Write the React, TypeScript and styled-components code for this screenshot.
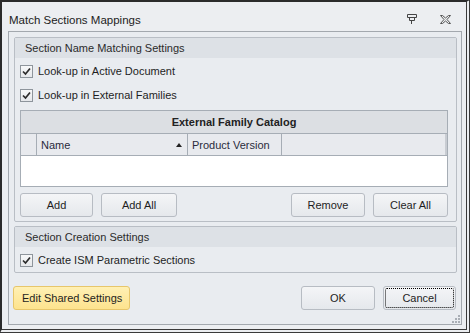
import styled, { createGlobalStyle } from "styled-components";

const GlobalStyle = createGlobalStyle`
  html, body {
    margin: 0;
    padding: 0;
    background: #ffffff;
  }
  body {
    font-family: "Liberation Sans", Arial, sans-serif;
    font-size: 11px;
    color: #1e1e1e;
  }
`;

const Window = styled.div`
  box-sizing: border-box;
  width: 470px;
  height: 333px;
  display: flex;
  flex-direction: column;
  background: #eceef1;
  border-left: 2px solid #2b2b2b;
  border-top: 2px solid #2b2b2b;
  border-right: 4px double #3a3a3a;
  border-bottom: 4px double #3a3a3a;
  padding: 0 4px 4px 6px;
`;

const TitleBar = styled.div`
  height: 29px;
  display: flex;
  align-items: center;
  padding-left: 1px;
  font-size: 11.5px;
  color: #222;
`;

const Title = styled.span`
  flex: 1;
  padding-top: 6px;
`;

const TitleButton = styled.span<{ $gap: number }>`
  width: 14px;
  height: 14px;
  display: flex;
  align-items: center;
  justify-content: center;
  margin-top: 6px;
  margin-right: ${(p) => p.$gap}px;
`;

const Frame = styled.div`
  flex: 1;
  position: relative;
  display: flex;
  flex-direction: column;
  background: #e9ecf0;
  border: 1px solid #a3a8ae;
  padding: 5px 4px 0 5px;
`;

const Group = styled.div`
  border: 1px solid #b9bec5;
  border-radius: 2px;
  display: flex;
  flex-direction: column;
  margin-bottom: 4px;
`;

const GroupHeader = styled.div`
  height: 20px;
  display: flex;
  align-items: center;
  padding-left: 10px;
  background: #dde1e6;
  color: #2b2b2b;
`;

const GroupBody = styled.div<{ $bottom: number }>`
  display: flex;
  flex-direction: column;
  padding: 1px 8px ${(p) => p.$bottom}px 5px;
`;

const CheckRow = styled.label`
  height: 24px;
  display: flex;
  align-items: center;
  gap: 5px;
`;

const Box = styled.span`
  box-sizing: border-box;
  width: 13px;
  height: 13px;
  border: 1px solid #8e959c;
  background: linear-gradient(#f7f8f9, #e6e8eb);
  display: flex;
  align-items: center;
  justify-content: center;
`;

const Grid = styled.div`
  margin-top: 3px;
  border: 1px solid #a6adb5;
  display: flex;
  flex-direction: column;
`;

const GridCaption = styled.div`
  height: 22px;
  display: flex;
  align-items: center;
  justify-content: center;
  font-weight: bold;
  background: #dcdfe3;
  border-bottom: 1px solid #a6adb5;
  color: #222;
`;

const HeaderRow = styled.div`
  height: 21px;
  display: flex;
  background: #e8eaee;
  border-bottom: 1px solid #a6adb5;
`;

const HeaderCell = styled.div<{ $w?: number }>`
  box-sizing: border-box;
  ${(p) => (p.$w ? `width: ${p.$w}px;` : "flex: 1;")}
  display: flex;
  align-items: center;
  padding-left: 4px;
  border-right: 1px solid #a6adb5;
  color: #2a2a3c;
  &:last-child {
    border-right: 2px solid #c8ccd2;
  }
`;

const SortArrow = styled.span`
  margin-left: auto;
  margin-right: 5px;
  width: 0;
  height: 0;
  border-left: 3px solid transparent;
  border-right: 3px solid transparent;
  border-bottom: 4px solid #222;
`;

const GridBody = styled.div`
  height: 30px;
  background: #ffffff;
`;

const ButtonRow = styled.div`
  display: flex;
  align-items: center;
  gap: 8px;
  margin-top: 6px;
`;

const Spacer = styled.div`
  flex: 1;
`;

const Button = styled.button<{ $w: number; $focus?: boolean; $accent?: boolean }>`
  box-sizing: border-box;
  width: ${(p) => p.$w}px;
  height: 24px;
  font-family: "Liberation Sans", Arial, sans-serif;
  font-size: 11px;
  color: #1e1e1e;
  border-radius: 3px;
  border: 1px solid ${(p) => (p.$accent ? "#e7c66b" : "#b7bcc3")};
  background: ${(p) =>
    p.$accent
      ? "linear-gradient(#fff0b4, #fde38e)"
      : "linear-gradient(#f4f5f7, #e5e8ec)"};
  position: relative;
  text-align: ${(p) => (p.$accent ? "left" : "center")};
  padding: 0 0 0 ${(p) => (p.$accent ? "8px" : "0")};
  ${(p) =>
    p.$focus
      ? `&::after {
    content: "";
    position: absolute;
    inset: 1px;
    border: 1px dotted #000;
    border-radius: 2px;
  }`
      : ""}
`;

const Footer = styled.div`
  display: flex;
  align-items: center;
  gap: 8px;
  margin-top: 9px;
  padding-right: 1px;
  margin-left: -1px;
`;

const Grip = styled.svg`
  position: absolute;
  right: 1px;
  bottom: 1px;
`;

function Check() {
  return (
    <Box>
      <svg width="9" height="9" viewBox="0 0 9 9">
        <path d="M1 4.5 L3.5 7 L8 1.5" fill="none" stroke="#2c2c2c" strokeWidth="1.7" />
      </svg>
    </Box>
  );
}

export default function App() {
  return (
    <>
      <GlobalStyle />
      <Window>
        <TitleBar>
          <Title>Match Sections Mappings</Title>
          <TitleButton $gap={19}>
            <svg width="10" height="11" viewBox="0 0 10 11">
              <path
                d="M0.5 0.5 H9.5 V3.5 H0.5 Z M2.5 3.5 V6.5 H7.5 V3.5 M4.5 6.5 V10"
                fill="none"
                stroke="#444"
                strokeWidth="1"
              />
            </svg>
          </TitleButton>
          <TitleButton $gap={10}>
            <svg width="11" height="9" viewBox="0 0 11 9">
              <path
                d="M0.5 0.5 H2.5 L5.5 3 L8.5 0.5 H10.5 L7 4.5 L10.5 8.5 H8.5 L5.5 6 L2.5 8.5 H0.5 L4 4.5 Z"
                fill="none"
                stroke="#555"
                strokeWidth="1"
              />
            </svg>
          </TitleButton>
        </TitleBar>
        <Frame>
          <Group>
            <GroupHeader>Section Name Matching Settings</GroupHeader>
            <GroupBody $bottom={4}>
              <CheckRow>
                <Check />
                Look-up in Active Document
              </CheckRow>
              <CheckRow>
                <Check />
                Look-up in External Families
              </CheckRow>
              <Grid>
                <GridCaption>External Family Catalog</GridCaption>
                <HeaderRow>
                  <HeaderCell $w={16} />
                  <HeaderCell $w={151}>
                    Name
                    <SortArrow />
                  </HeaderCell>
                  <HeaderCell $w={94}>Product Version</HeaderCell>
                  <HeaderCell />
                </HeaderRow>
                <GridBody />
              </Grid>
              <ButtonRow>
                <Button $w={73}>Add</Button>
                <Button $w={76}>Add All</Button>
                <Spacer />
                <Button $w={74}>Remove</Button>
                <Button $w={75}>Clear All</Button>
              </ButtonRow>
            </GroupBody>
          </Group>
          <Group>
            <GroupHeader>Section Creation Settings</GroupHeader>
            <GroupBody $bottom={0}>
              <CheckRow>
                <Check />
                Create ISM Parametric Sections
              </CheckRow>
            </GroupBody>
          </Group>
          <Footer>
            <Button $w={117} $accent>
              Edit Shared Settings
            </Button>
            <Spacer />
            <Button $w={74}>OK</Button>
            <Button $w={73} $focus>
              Cancel
            </Button>
          </Footer>
          <Grip width="8" height="8" viewBox="0 0 8 8">
            <g fill="#a9aeb5">
              <rect x="6" y="0" width="2" height="2" />
              <rect x="3" y="3" width="2" height="2" />
              <rect x="6" y="3" width="2" height="2" />
              <rect x="0" y="6" width="2" height="2" />
              <rect x="3" y="6" width="2" height="2" />
              <rect x="6" y="6" width="2" height="2" />
            </g>
          </Grip>
        </Frame>
      </Window>
    </>
  );
}
